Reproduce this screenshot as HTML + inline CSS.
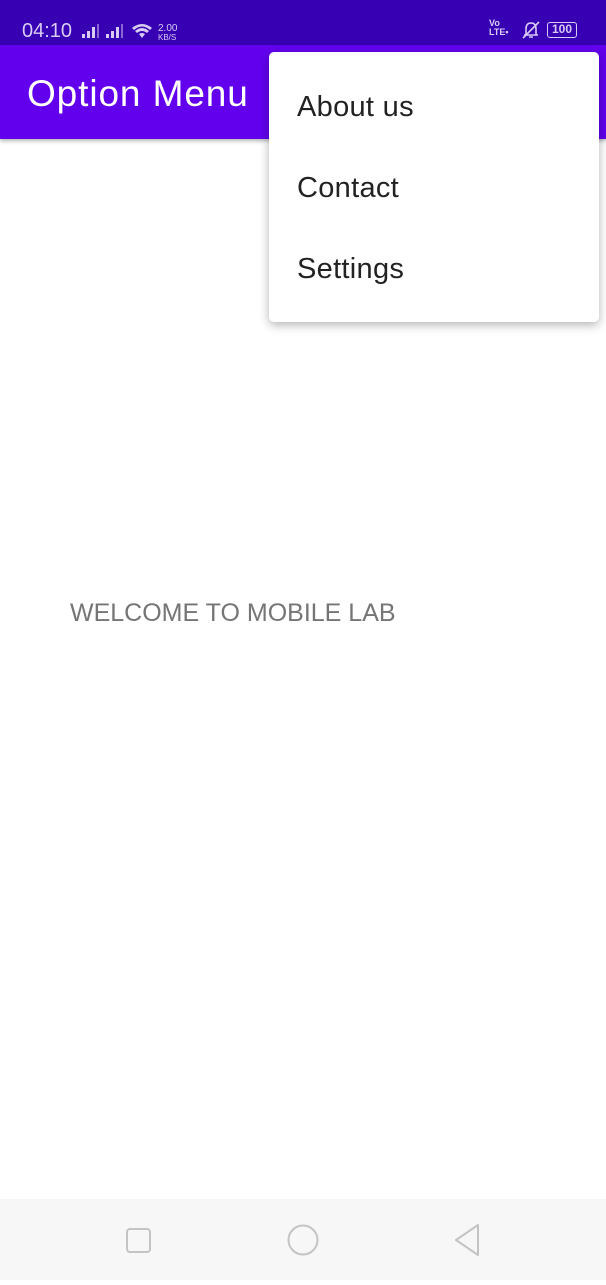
<!DOCTYPE html>
<html><head><meta charset="utf-8"><style>
*{margin:0;padding:0;box-sizing:border-box}
body{width:606px;height:1280px;position:relative;background:#fff;font-family:"Liberation Sans",sans-serif;overflow:hidden}
.sb{position:absolute;left:0;top:0;width:606px;height:45px;background:#3700b3;color:#d8ccf5}
.ab{position:absolute;left:0;top:45px;width:606px;height:94px;background:#6200ee;box-shadow:0 2px 4px rgba(0,0,0,.3)}
.title{position:absolute;left:27px;top:73px;color:#fff;font-size:37px;letter-spacing:0.9px}
.menu{position:absolute;left:269px;top:52px;width:330px;height:270px;background:#fff;border-radius:5px;box-shadow:0 3px 10px rgba(0,0,0,.3)}
.menu div{position:absolute;left:28px;font-size:29px;color:#222;letter-spacing:0.3px}
.wel{position:absolute;left:70px;top:599px;font-size:25px;color:#757575}
.nav{position:absolute;left:0;top:1199px;width:606px;height:81px;background:#f7f7f7}
</style></head><body>
<div class="sb">
<span style="position:absolute;left:22px;top:20px;font-size:20px">04:10</span>
<svg style="position:absolute;left:80px;top:22px" width="110" height="20" fill="#d8ccf5">
<rect x="2" y="12" width="3" height="4"/><rect x="7" y="9" width="3" height="7"/><rect x="12" y="5" width="3" height="11"/><rect x="17" y="2" width="2" height="14" opacity=".5"/>
<rect x="26" y="12" width="3" height="4"/><rect x="31" y="9" width="3" height="7"/><rect x="36" y="5" width="3" height="11"/><rect x="41" y="2" width="2" height="14" opacity=".5"/>
<path d="M52 6 Q62 -2 72 6 L70 8 Q62 1 54 8Z M55 9 Q62 3 69 9 L67 11 Q62 7 57 11Z M59 12 Q62 10 65 12 L62 16Z"/>
<text x="78" y="9" font-size="10" font-family="Liberation Sans">2.00</text><text x="78" y="18" font-size="8" font-family="Liberation Sans">KB/S</text>
</svg>
<span style="position:absolute;left:489px;top:19px;font-size:9px;line-height:9px;font-weight:bold">Vo<br>LTE▪</span>
<svg style="position:absolute;left:521px;top:20px" width="20" height="20" fill="none" stroke="#d8ccf5" stroke-width="1.6">
<path d="M5 15 L5 9 Q5 3 10 3 Q15 3 15 9 L15 15 Z M3 15 L17 15 M8 17 L12 17 M2 18 L18 2"/>
</svg>
<span style="position:absolute;left:547px;top:22px;width:30px;height:16px;border:1.5px solid #d8ccf5;border-radius:3px;font-size:12px;text-align:center;line-height:13px;font-weight:bold">100</span>
</div>
<div class="ab"></div>
<div class="title">Option Menu</div>
<div class="menu">
<div style="top:39px">About us</div>
<div style="top:120px">Contact</div>
<div style="top:201px">Settings</div>
</div>
<div class="wel">WELCOME TO MOBILE LAB</div>
<div class="nav">
<svg width="606" height="81" fill="none" stroke="#c4c4c4" stroke-width="2">
<rect x="127" y="30" width="23" height="23" rx="3"/>
<circle cx="303" cy="41" r="14.5"/>
<path d="M478 26 L478 56 L456 41 Z" stroke-linejoin="round"/>
</svg>
</div>
</body></html>
